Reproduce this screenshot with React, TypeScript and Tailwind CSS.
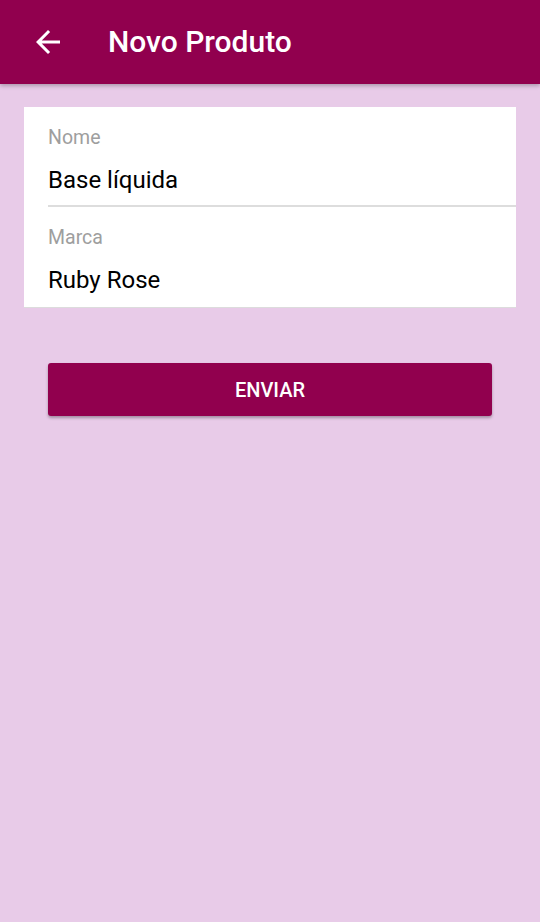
const ArrowBack = () => (
  <svg width="36" height="36" viewBox="0 0 24 24" fill="white">
    <path d="M20 11H7.83l5.59-5.59L12 4l-8 8 8 8 1.41-1.41L7.83 13H20v-2z" />
  </svg>
);

const Field = ({ label, value, last = false }: { label: string; value: string; last?: boolean }) => (
  <div className={last ? "h-[100px] pl-6 pt-[21px] shadow-[0_1px_0_#dcdcdc]" : "h-[100px] pl-6 pt-[21px]"}>
    <div className={last ? "h-full" : "h-full border-b-2 border-[#dddddd]"}>
      <p className="text-[19.5px] leading-[20px] text-[#9e9e9e]">{label}</p>
      <p className="mt-[18px] text-[24px] leading-[28px] text-black">{value}</p>
    </div>
  </div>
);

export default function App() {
  return (
    <div
      className="min-h-[922px] bg-[#e8cbe8]"
      style={{ fontFamily: "Roboto, 'Noto Sans', sans-serif" }}
    >
      <header className="relative z-10 flex h-[84px] items-center bg-[#91004e] shadow-[0_2px_4px_rgba(0,0,0,0.25)]">
        <button className="ml-[30px] flex h-9 w-9 items-center justify-center">
          <ArrowBack />
        </button>
        <h1 className="ml-[42px] pb-[2px] text-[30px] font-medium text-white">Novo Produto</h1>
      </header>

      <div className="px-6 pt-[23px]">
        <div className="bg-white">
          <Field label="Nome" value="Base líquida" />
          <Field label="Marca" value="Ruby Rose" last />
        </div>

        <div className="px-6 pt-[56px]">
          <button className="flex h-[53px] w-full items-center justify-center rounded-[3px] bg-[#91004e] text-[20px] font-medium text-white shadow-[0_2px_3px_rgba(0,0,0,0.3)]">
            ENVIAR
          </button>
        </div>
      </div>
    </div>
  );
}
